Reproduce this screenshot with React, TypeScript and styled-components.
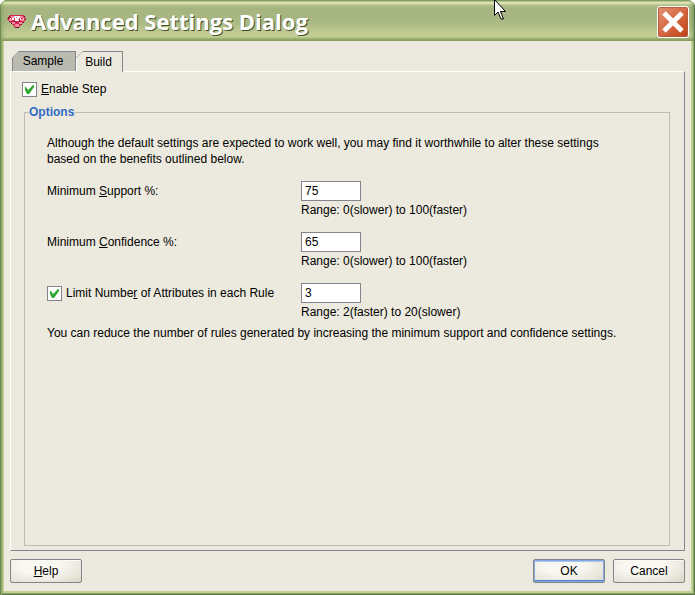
import React from "react";
import styled, { createGlobalStyle } from "styled-components";

const GlobalStyle = createGlobalStyle`
  * { box-sizing: border-box; }
  body {
    margin: 0;
    background: #fff;
    color: #000;
    font: 12px/16px "Liberation Sans", Arial, sans-serif;
  }
  button, input { font: inherit; color: inherit; }
`;

const Window = styled.div`
  display: flex;
  flex-direction: column;
  min-height: 100vh;
  overflow: hidden;
  background: #eceade;
  border-radius: 8px 8px 0 0;
  box-shadow: inset 1px 0 #6c8c54, inset 2px 0 #8ba468, inset -1px 0 #56764a, inset 0 -1px #56764a,
    inset -2px -2px #8aa564, inset 3px 0 #a9bc82, inset 4px 0 #c2d093, inset -4px -4px #c2d093;
`;

const TitleBar = styled.header`
  display: flex;
  align-items: center;
  height: 41px;
  padding: 3px 6px 0 7px;
  background: linear-gradient(
    #7d9a5c 0, #8aa468 1px, #e2e8b8 2px, #d0d9a4 4px, #b2c08a 5px, #a6b47f 8px, #a8b681 18px,
    #adbb84 24px, #c0cb92 33px, #c0cb92 37px, #aebd80 38px, #94a96a 39px, #879f60 41px
  );
  box-shadow: inset 1px 0 #6c8c54, inset -1px 0 #56764a, inset 5px 0 4px -3px #86a064, inset -5px 0 4px -3px #6f8e54;
`;

const Title = styled.h1`
  flex: 1;
  margin: 0 0 0 4px;
  padding-bottom: 2px;
  color: #fff;
  font: 700 22px/32px "Open Sans", "Trebuchet MS", sans-serif;
  text-shadow: 1px 1px #46512b;
`;

const CloseButton = styled.button`
  display: flex;
  width: 32px;
  height: 32px;
  padding: 0;
  border: 1px solid #fff;
  border-radius: 3px;
  background: linear-gradient(135deg, #e39378, #d96c48 45%, #c94f20 80%, #b9421b);
  box-shadow: inset 0 0 1px 1px #b85a3c;
`;

const Body = styled.main`
  flex: 1;
  display: flex;
  flex-direction: column;
  padding: 10px 10px 12px;
`;

const TabList = styled.div`
  display: flex;
  z-index: 1;
  height: 21px;
  margin: 0 0 -1px 2px;
`;

const TabButton = styled.button<{ $active?: boolean; $width: number }>`
  width: ${(p) => p.$width}px;
  height: 21px;
  padding: 0 2px 0 0;
  border: 0;
  border-bottom: ${(p) => (p.$active ? "0" : "1px solid #fff")};
  color: #000;
  background:
    linear-gradient(135deg, transparent 4px, #84848a 4px, #84848a 5px, transparent 5px) 0 0 / 9px 9px no-repeat,
    linear-gradient(#84848a, #84848a) 7px 0 / 100% 1px no-repeat,
    linear-gradient(#84848a, #84848a) 100% 0 / 1px 100% no-repeat,
    linear-gradient(
        ${(p) => (p.$active ? "#fff, #fff" : "#84848a, #84848a")}
      ) 0 7px / 1px 100% no-repeat,
    ${(p) => (p.$active ? "#eceade" : "#b9bab0")};
  clip-path: polygon(7px 0, 100% 0, 100% 100%, 0 100%, 0 7px);
`;

const Panel = styled.section`
  flex: 1;
  display: flex;
  flex-direction: column;
  padding: 9px 14px 4px 11px;
  border: 1px solid;
  border-color: #fff #84848a #84848a #fff;
`;

const CheckLabel = styled.label`
  display: flex;
  align-items: center;
  gap: 4px;
  white-space: nowrap;
`;

const CheckBox = styled.input`
  appearance: none;
  flex: none;
  width: 15px;
  height: 15px;
  margin: 0;
  border: 1px solid #84848a;
  background: #fff;
`;

const CheckFrame = styled.span`
  display: grid;
  & > * { grid-area: 1 / 1; }
  & > svg { pointer-events: none; }
`;

const Key = styled.u`
  text-underline-offset: 1px;
  text-decoration-thickness: 1px;
  text-decoration-skip-ink: none;
`;

const Options = styled.fieldset`
  flex: 1;
  min-width: 0;
  margin: 7px 0 0 2px;
  padding: 15px 22px;
  border: 1px solid #bdbdb2;
`;

const Legend = styled.legend`
  margin-left: -18px;
  padding: 0 1px 0 0;
  color: #316ac5;
  font-weight: bold;
`;

const Note = styled.p`
  max-width: 580px;
  margin: 0;
`;

const Fields = styled.div`
  display: grid;
  grid-template-columns: 254px 1fr;
  row-gap: 13px;
  margin: 14px 0 4px;
`;

const FieldLabel = styled.label`
  line-height: 20px;
`;

const LabelCell = styled.div`
  display: flex;
  align-items: center;
  height: 20px;
`;

const NumberInput = styled.input`
  display: block;
  width: 60px;
  height: 20px;
  padding: 0 3px;
  border: 1px solid #84848a;
  background: #fff;
`;

const Hint = styled.div`
  line-height: 18px;
`;

const Footer = styled.footer`
  display: flex;
  gap: 8px;
  margin-top: 8px;
`;

const PushButton = styled.button<{ $primary?: boolean }>`
  width: 72px;
  height: 24px;
  padding: 0;
  border: 1px solid #84848a;
  border-radius: 2px;
  background: radial-gradient(ellipse at 42% 25%, #f8f7f2 35%, #e8e6da 75%, #cbc9b8 115%);
  box-shadow: ${(p) =>
    p.$primary ? "inset 0 0 0 1px #86a9e2, inset 0 2px #a9c4ee, inset 0 -2px #4f82cc" : "inset 0 1px #fbfaf5"};
  &:first-child { margin-right: auto; }
`;

const Pointer = styled.svg`
  position: absolute;
  top: 0;
  left: 494px;
  pointer-events: none;
`;

function Check({ id }: { id: string }) {
  return (
    <CheckFrame>
      <CheckBox type="checkbox" id={id} defaultChecked />
      <svg width="15" height="15" viewBox="0 0 15 15" aria-hidden="true">
        <path d="M3 5h1l2 3 5-5h1v2l-5 7H5L3 8z" fill="#2ea82e" />
      </svg>
    </CheckFrame>
  );
}

function Gem() {
  return (
    <svg width="20" height="16" viewBox="0 0 20 16" aria-hidden="true">
      <path d="M3 1h14l2 4-2 3-4 4-1 2H8l-1-2-4-4-3-3z" fill="#d3284c" />
      <path d="M4 2h3v2H4zM13 2h3v2h-3zM2 5h3v2H2zM14 5h3v2h-3zM5 8h3v2H5zM12 8h3v2h-3zM8 10h4v3H8z" fill="#f58aa2" />
      <path d="M7 2h6v2H7zM8 4h4v3H8zM5 4h2v2H5zM13 4h1v2h-1zM3 4h1v1H3zM16 4h1v1h-1z" fill="#fff" />
      <path d="M9 3h1v1H9zM11 5h1v1h-1z" fill="#f58aa2" />
      <path d="M2 2h1v1H2zM1 3h1v2H1zM2 7h1v1H2zM4 9h1v1H4zM17 2h1v1h-1zM18 5h1v1h-1zM16 8h1v1h-1zM14 10h1v1h-1zM8 13h4v1H8zM7 7h1v1H7zM12 7h1v1h-1z" fill="#6e1028" />
    </svg>
  );
}

export default function App() {
  return (
    <>
      <GlobalStyle />
      <Window role="dialog" aria-labelledby="title">
        <TitleBar>
          <Gem />
          <Title id="title">Advanced Settings Dialog</Title>
          <CloseButton aria-label="Close">
            <svg width="30" height="30" viewBox="0 0 30 30" aria-hidden="true">
              <path d="M6 6l18 18M24 6L6 24" stroke="#fff" strokeWidth="5" />
            </svg>
          </CloseButton>
        </TitleBar>
        <Body>
          <TabList role="tablist">
            <TabButton role="tab" aria-selected="false" $width={64}>Sample</TabButton>
            <TabButton role="tab" aria-selected="true" $active $width={47}>Build</TabButton>
          </TabList>
          <Panel role="tabpanel">
            <CheckLabel htmlFor="enable">
              <Check id="enable" />
              <span><Key>E</Key>nable Step</span>
            </CheckLabel>
            <Options>
              <Legend>Options</Legend>
              <Note>
                Although the default settings are expected to work well, you may find it worthwhile to alter these
                settings based on the benefits outlined below.
              </Note>
              <Fields>
                <FieldLabel htmlFor="support">Minimum <Key>S</Key>upport %:</FieldLabel>
                <div>
                  <NumberInput id="support" defaultValue="75" />
                  <Hint>Range: 0(slower) to 100(faster)</Hint>
                </div>
                <FieldLabel htmlFor="confidence">Minimum <Key>C</Key>onfidence %:</FieldLabel>
                <div>
                  <NumberInput id="confidence" defaultValue="65" />
                  <Hint>Range: 0(slower) to 100(faster)</Hint>
                </div>
                <LabelCell>
                  <CheckLabel htmlFor="limit">
                    <Check id="limit" />
                    <span>Limit Numbe<Key>r</Key> of Attributes in each Rule</span>
                  </CheckLabel>
                </LabelCell>
                <div>
                  <NumberInput aria-label="Limit Number of Attributes in each Rule" defaultValue="3" />
                  <Hint>Range: 2(faster) to 20(slower)</Hint>
                </div>
              </Fields>
              <Note>
                You can reduce the number of rules generated by increasing the minimum support and confidence settings.
              </Note>
            </Options>
          </Panel>
          <Footer>
            <PushButton><Key>H</Key>elp</PushButton>
            <PushButton $primary>OK</PushButton>
            <PushButton>Cancel</PushButton>
          </Footer>
        </Body>
        <Pointer width="13" height="20" viewBox="0 0 13 20" aria-hidden="true">
          <path d="M.5-.5v16l3.500-3.500 3 7h2.500l-3-7.500h5z" fill="#fff" stroke="#000" />
        </Pointer>
      </Window>
    </>
  );
}
